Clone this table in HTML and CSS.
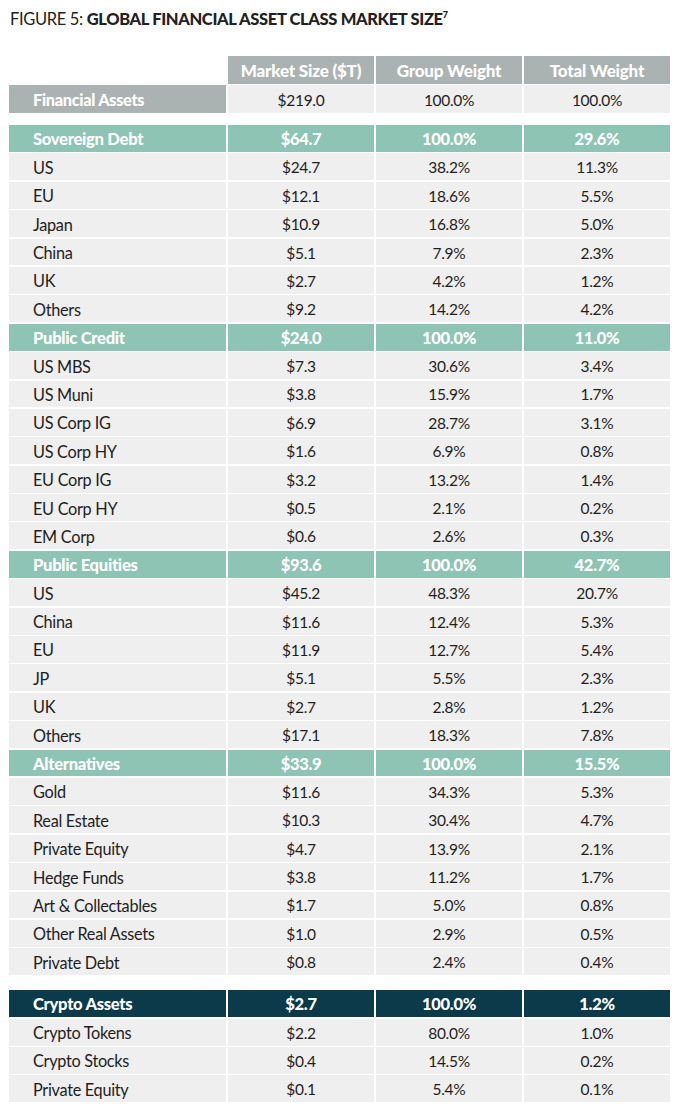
FILE: index.html
```html
<!DOCTYPE html>
<html>
<head>
<meta charset="utf-8">
<link rel="stylesheet" href="styles.css">
</head>
<body>
<div class="title"><span class="fig">FIGURE 5: </span><b>GLOBAL FINANCIAL ASSET CLASS MARKET SIZE</b><sup>7</sup></div>

<div class="grid top">
  <div class="blank"></div>
  <div class="hd">Market Size ($T)</div>
  <div class="hd">Group Weight</div>
  <div class="hd">Total Weight</div>
  <div class="fa lbl">Financial Assets</div>
  <div class="c">$219.0</div>
  <div class="c">100.0%</div>
  <div class="c">100.0%</div>
</div>

<div class="grid main">
  <div class="g lbl">Sovereign Debt</div><div class="g">$64.7</div><div class="g">100.0%</div><div class="g">29.6%</div>
  <div class="l">US</div><div class="c">$24.7</div><div class="c">38.2%</div><div class="c">11.3%</div>
  <div class="l">EU</div><div class="c">$12.1</div><div class="c">18.6%</div><div class="c">5.5%</div>
  <div class="l">Japan</div><div class="c">$10.9</div><div class="c">16.8%</div><div class="c">5.0%</div>
  <div class="l">China</div><div class="c">$5.1</div><div class="c">7.9%</div><div class="c">2.3%</div>
  <div class="l">UK</div><div class="c">$2.7</div><div class="c">4.2%</div><div class="c">1.2%</div>
  <div class="l">Others</div><div class="c">$9.2</div><div class="c">14.2%</div><div class="c">4.2%</div>

  <div class="g lbl">Public Credit</div><div class="g">$24.0</div><div class="g">100.0%</div><div class="g">11.0%</div>
  <div class="l">US MBS</div><div class="c">$7.3</div><div class="c">30.6%</div><div class="c">3.4%</div>
  <div class="l">US Muni</div><div class="c">$3.8</div><div class="c">15.9%</div><div class="c">1.7%</div>
  <div class="l">US Corp IG</div><div class="c">$6.9</div><div class="c">28.7%</div><div class="c">3.1%</div>
  <div class="l">US Corp HY</div><div class="c">$1.6</div><div class="c">6.9%</div><div class="c">0.8%</div>
  <div class="l">EU Corp IG</div><div class="c">$3.2</div><div class="c">13.2%</div><div class="c">1.4%</div>
  <div class="l">EU Corp HY</div><div class="c">$0.5</div><div class="c">2.1%</div><div class="c">0.2%</div>
  <div class="l">EM Corp</div><div class="c">$0.6</div><div class="c">2.6%</div><div class="c">0.3%</div>

  <div class="g lbl">Public Equities</div><div class="g">$93.6</div><div class="g">100.0%</div><div class="g">42.7%</div>
  <div class="l">US</div><div class="c">$45.2</div><div class="c">48.3%</div><div class="c">20.7%</div>
  <div class="l">China</div><div class="c">$11.6</div><div class="c">12.4%</div><div class="c">5.3%</div>
  <div class="l">EU</div><div class="c">$11.9</div><div class="c">12.7%</div><div class="c">5.4%</div>
  <div class="l">JP</div><div class="c">$5.1</div><div class="c">5.5%</div><div class="c">2.3%</div>
  <div class="l">UK</div><div class="c">$2.7</div><div class="c">2.8%</div><div class="c">1.2%</div>
  <div class="l">Others</div><div class="c">$17.1</div><div class="c">18.3%</div><div class="c">7.8%</div>

  <div class="g lbl">Alternatives</div><div class="g">$33.9</div><div class="g">100.0%</div><div class="g">15.5%</div>
  <div class="l">Gold</div><div class="c">$11.6</div><div class="c">34.3%</div><div class="c">5.3%</div>
  <div class="l">Real Estate</div><div class="c">$10.3</div><div class="c">30.4%</div><div class="c">4.7%</div>
  <div class="l">Private Equity</div><div class="c">$4.7</div><div class="c">13.9%</div><div class="c">2.1%</div>
  <div class="l">Hedge Funds</div><div class="c">$3.8</div><div class="c">11.2%</div><div class="c">1.7%</div>
  <div class="l">Art &amp; Collectables</div><div class="c">$1.7</div><div class="c">5.0%</div><div class="c">0.8%</div>
  <div class="l">Other Real Assets</div><div class="c">$1.0</div><div class="c">2.9%</div><div class="c">0.5%</div>
  <div class="l">Private Debt</div><div class="c">$0.8</div><div class="c">2.4%</div><div class="c">0.4%</div>
</div>

<div class="grid crypto">
  <div class="d lbl">Crypto Assets</div><div class="d">$2.7</div><div class="d">100.0%</div><div class="d">1.2%</div>
  <div class="l">Crypto Tokens</div><div class="c">$2.2</div><div class="c">80.0%</div><div class="c">1.0%</div>
  <div class="l">Crypto Stocks</div><div class="c">$0.4</div><div class="c">14.5%</div><div class="c">0.2%</div>
  <div class="l">Private Equity</div><div class="c">$0.1</div><div class="c">5.4%</div><div class="c">0.1%</div>
</div>
</body>
</html>
```
FILE: styles.css
```css
html, body {
  margin: 0;
  padding: 0;
  background: #ffffff;
}
body {
  font-family: Lato, "Open Sans", sans-serif;
  color: #222222;
  padding: 0 0 0 9px;
  width: 661px;
}
.title {
  font-size: 16.5px;
  color: #222;
  height: 22px;
  padding-top: 9px;
  padding-left: 1px;
  letter-spacing: -0.35px;
}
.title .fig {
  font-weight: 400;
}
.title b {
  font-weight: 900;
}
.title sup {
  font-size: 9px;
  font-weight: 900;
  vertical-align: 7px;
  line-height: 0;
}
.grid {
  display: grid;
  grid-template-columns: 217px 146px 146px 146px;
  column-gap: 2px;
  row-gap: 1.5px;
  grid-auto-rows: 26.9px;
}
.grid.top {
  margin-top: 25px;
  row-gap: 1px;
  grid-auto-rows: 28px;
}
.grid.main {
  margin-top: 12px;
}
.grid.crypto {
  margin-top: 15px;
}
.grid > div {
  display: flex;
  align-items: center;
  justify-content: center;
  font-size: 15.5px;
  white-space: nowrap;
  letter-spacing: -0.3px;
  padding-top: 1px;
  box-sizing: border-box;
}
.grid > .lbl,
.grid > .l {
  justify-content: flex-start;
  padding-left: 24px;
  font-size: 16.3px;
}
.blank {
  background: #ffffff;
}
.grid > .hd {
  background: #abb3b2;
  color: #ffffff;
  font-weight: 900;
  font-size: 17px;
  letter-spacing: -0.2px;
}
.fa {
  background: #abb3b2;
  color: #ffffff;
  font-weight: 900;
}
.c, .l {
  background: #efefef;
  color: #1e1e1e;
}
.grid > .g {
  background: #8ec4b4;
  color: #ffffff;
  font-weight: 900;
  font-size: 16.5px;
}
.grid > .d {
  background: #0b3a4a;
  color: #ffffff;
  font-weight: 900;
  font-size: 16.5px;
}
.grid > .g.lbl,
.grid > .d.lbl {
  font-size: 16.6px;
}
```
